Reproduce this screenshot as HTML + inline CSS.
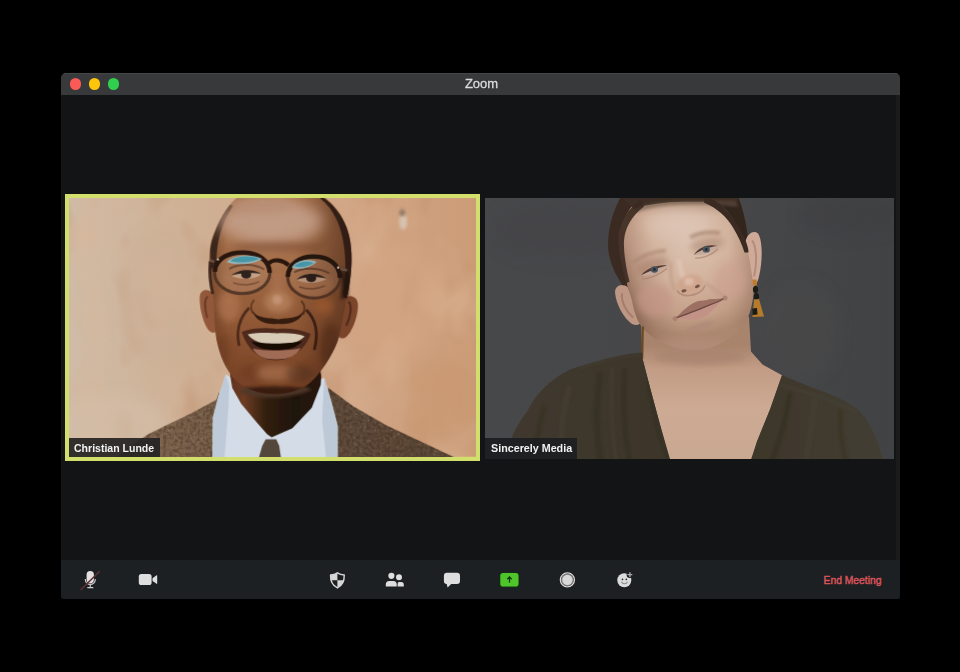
<!DOCTYPE html>
<html lang="en">
<head>
<meta charset="utf-8">
<title>Zoom</title>
<style>
*{box-sizing:border-box;margin:0;padding:0}
html,body{width:960px;height:672px;background:#000;overflow:hidden;font-family:"Liberation Sans",sans-serif}
#win{position:absolute;left:61px;top:73px;width:838.8px;height:525.6px;background:#131416;border-radius:5px 5px 3px 3px;overflow:hidden}
#titlebar{position:absolute;left:0;top:0;width:100%;height:22px;background:#38393b;border-top:1px solid #444547}
#title{position:absolute;left:0;right:0;top:1.9px;text-align:center;font-size:13.7px;line-height:16px;color:#dcdcdc;padding-left:2px;-webkit-text-stroke:.3px #dcdcdc}
#title span{display:inline-block;transform:scaleX(.95)}
.tl{position:absolute;top:4.4px;width:11.5px;height:11.5px;border-radius:50%}
#edge{position:absolute;right:0;top:22px;width:3.5px;bottom:0;background:#1a1b1c}
#toolbar{position:absolute;left:0;top:487.3px;width:100%;height:39px;background:#1c2022}
#icons{position:absolute;left:0;top:-.3px}
.tile{position:absolute;overflow:hidden}
#t1{left:3.75px;top:121px;width:415.65px;height:266.8px;background:#d3df6c}
#t1 svg{position:absolute;left:4px;top:4.2px}
#t2{left:424px;top:124.5px;width:409px;height:261px;background:#444446}
#t2 svg{position:absolute;left:0;top:0}
.label{position:absolute;left:0;bottom:0;height:19.5px;color:#f2f2f2;font-weight:bold;font-size:11.3px;line-height:19.5px;white-space:nowrap}
.label span{display:inline-block;transform:scaleX(.932);transform-origin:0 50%;position:relative}
#l1{left:4px;bottom:4px;height:18.6px;line-height:18.6px;width:91px;padding-left:5.3px;background:rgba(38,36,34,.93)}
#l1 span{top:.9px}
#l2{height:20.8px;line-height:20.8px;width:92px;padding-left:5.7px;background:rgba(30,31,33,.95)}
#l2 span{top:.2px;transform:scaleX(.95)}
#end{position:absolute;left:762.6px;top:502px;font-size:10.3px;line-height:12px;color:#d9535a;-webkit-text-stroke:.45px #d9535a;white-space:nowrap}
.ico{position:absolute;top:0;left:0}
</style>
</head>
<body>
<div id="win">
  <div id="titlebar">
    <div class="tl" style="left:8.7px;background:#fc5a56"></div>
    <div class="tl" style="left:27.9px;background:#fdc50c"></div>
    <div class="tl" style="left:46.8px;background:#30d04e"></div>
    <div id="title"><span>Zoom</span></div>
  </div>
  <div id="edge"></div>
  <div class="tile" id="t1">
    <svg width="407.65" height="258.6" viewBox="68.75 198.2 407.65 258.6">
<defs>
<linearGradient id="bg1" x1="68" y1="0" x2="477" y2="0" gradientUnits="userSpaceOnUse">
<stop offset="0" stop-color="#d0bba6"/><stop offset=".2" stop-color="#cfb49a"/><stop offset=".5" stop-color="#cfaa8c"/><stop offset=".72" stop-color="#d1a483"/><stop offset="1" stop-color="#cc9c77"/>
</linearGradient>
<radialGradient id="skin1" cx="270" cy="218" r="160" gradientUnits="userSpaceOnUse">
<stop offset="0" stop-color="#b88c6e"/><stop offset=".2" stop-color="#ab7651"/><stop offset=".45" stop-color="#9b643f"/><stop offset=".75" stop-color="#8c5432"/><stop offset="1" stop-color="#7a4528"/>
</radialGradient>
<linearGradient id="side1" x1="205" y1="0" x2="355" y2="0" gradientUnits="userSpaceOnUse">
<stop offset="0" stop-color="#2a140c" stop-opacity=".3"/><stop offset=".15" stop-color="#2a140c" stop-opacity="0"/><stop offset=".6" stop-color="#2a140c" stop-opacity="0"/><stop offset="1" stop-color="#2a140c" stop-opacity=".45"/>
</linearGradient>
<linearGradient id="neck1" x1="226" y1="0" x2="324" y2="0" gradientUnits="userSpaceOnUse">
<stop offset="0" stop-color="#5a2f1c"/><stop offset=".18" stop-color="#6e3c24"/><stop offset=".4" stop-color="#33200f"/><stop offset=".7" stop-color="#1e1208"/><stop offset="1" stop-color="#2a180e"/>
</linearGradient>
<linearGradient id="jk1" x1="110" y1="0" x2="460" y2="0" gradientUnits="userSpaceOnUse">
<stop offset="0" stop-color="#826851"/><stop offset=".3" stop-color="#785f4a"/><stop offset=".62" stop-color="#614c3b"/><stop offset="1" stop-color="#5c4838"/>
</linearGradient>
<filter id="b1" x="-5%" y="-5%" width="110%" height="110%"><feGaussianBlur stdDeviation=".55"/></filter>
<filter id="b2" x="-150%" y="-150%" width="400%" height="400%"><feGaussianBlur stdDeviation="1.6"/></filter>
<filter id="b3" x="-150%" y="-150%" width="400%" height="400%"><feGaussianBlur stdDeviation="3"/></filter>
<filter id="b6" x="-150%" y="-150%" width="400%" height="400%"><feGaussianBlur stdDeviation="7"/></filter>
<filter id="tw" x="0" y="0" width="100%" height="100%" color-interpolation-filters="sRGB"><feTurbulence type="fractalNoise" baseFrequency=".3" numOctaves="2" seed="3" result="n"/><feColorMatrix in="n" values="0 0 0 0 .16  0 0 0 0 .11  0 0 0 0 .07  2.2 2.2 0 0 -1.9" result="d"/><feColorMatrix in="n" values="0 0 0 0 .72  0 0 0 0 .62  0 0 0 0 .52  -2.2 0 -2.2 0 1.75" result="l"/><feMerge result="m"><feMergeNode in="d"/><feMergeNode in="l"/></feMerge><feComposite in="m" in2="SourceGraphic" operator="in"/></filter>
<filter id="mot" x="0" y="0" width="100%" height="100%" color-interpolation-filters="sRGB"><feTurbulence type="fractalNoise" baseFrequency=".018 .012" numOctaves="3" seed="11" result="n"/><feColorMatrix in="n" values="0 0 0 0 .86  0 0 0 0 .72  0 0 0 0 .6  3 0 0 0 -1.35" result="l"/><feColorMatrix in="n" values="0 0 0 0 .72  0 0 0 0 .5  0 0 0 0 .36  0 -3 0 0 1.3" result="d"/><feMerge><feMergeNode in="d"/><feMergeNode in="l"/></feMerge></filter>
<clipPath id="hc"><path d="M240 196 C228 203 218 220 211 241 C208 255 209 275 212 292 L213.500 300 C214 320 215 335 217 343 C219.500 355 225 368 233 378 C243 389 260 394.500 274 394.500 C290 394.500 305 389 314 379 C325 367 335 350 338.500 338 C343 320 345 305 347 295 C351 280 352 262 351 250 C350 230 342 212 326 199 L322 196Z"/></clipPath>
<clipPath id="c1"><rect x="68.5" y="197.5" width="408.5" height="259.5"/></clipPath>
</defs>
<g clip-path="url(#c1)">
<rect x="60" y="190" width="430" height="280" fill="url(#bg1)"/>
<rect x="68" y="197" width="410" height="262" filter="url(#mot)" opacity=".45"/>
<g filter="url(#b6)" opacity=".5">
<ellipse cx="110" cy="425" rx="60" ry="30" fill="#d4c0ac"/>
<ellipse cx="400" cy="300" rx="40" ry="60" fill="#d4a684"/>
<ellipse cx="160" cy="300" rx="40" ry="70" fill="#cbb097"/>
<ellipse cx="440" cy="400" rx="40" ry="40" fill="#c79670"/>
<ellipse cx="380" cy="400" rx="30" ry="20" fill="#cfa585"/>
</g>
<ellipse cx="403" cy="222" rx="4" ry="8" fill="#d8cabc" filter="url(#b2)" opacity=".8"/><ellipse cx="402" cy="213" rx="3" ry="3.500" fill="#86705f" filter="url(#b2)" opacity=".8"/>
<g filter="url(#b1)">
<!-- jacket -->
<path id="jk" d="M219 392 L216 400 L190 414 L166 425.500 L147 435 L112 460 L458 460 L453 457 L420 441.500 L386 425.500 L353 406.500 L328 388 L320 420 L225 420Z" fill="url(#jk1)"/>
<!-- shirt -->
<path d="M225.500 374.500 L218 397 L212.500 418 L212 460 L337.500 460 L337.500 426 L331 401 L324 378 L300 390 L250 390Z" fill="#d3dce7"/>
<path d="M225.500 374.500 L218 397 L212.500 418 L212 460 L224 460 L228 410 L229 386Z" fill="#b9c6d4" opacity=".8"/>
<path d="M324 378 L331 401 L337.500 426 L337.500 460 L326 460 L322 420Z" fill="#b4c1cf" opacity=".7"/>
<!-- tie -->
<path d="M265.500 439.500 L276 439.500 L279 446 L281 460 L258 460 L262 446Z" fill="#53473a"/>
<!-- neck -->
<path d="M231 365 L230 376 L232 388 L241 404 L256 422 L267 434.500 L271.500 437.500 L276 435.500 L292 428.500 L311.500 408 L320.500 385 L321 376 L319 365Z" fill="url(#neck1)"/>
<path d="M238 392 C255 400 290 400 312 390 L300 384 L250 384Z" fill="#50392c" filter="url(#b2)" opacity=".9"/>
<!-- ears -->
<path d="M214.500 295 C209 288 200 288.500 199.500 297 C199 310 204 326 209 331 C213 334.500 216.500 333 217.500 328Z" fill="#93583a"/>
<path d="M208 297 C204 298 204 308 207 318" stroke="#5a2f1c" stroke-width="2" fill="none" opacity=".7"/>
<path d="M341 300 C346 294.500 356 294.500 357.500 303 C359 314 352 332 346 337 C342 340 338 338.500 337 333Z" fill="#7a452c"/>
<path d="M348 302 C352 304 351 316 346 326" stroke="#3e2015" stroke-width="2" fill="none" opacity=".7"/>
<!-- head -->
<path d="M240 196 C228 203 218 220 211 241 C208 255 209 275 212 292 L213.500 300 C214 320 215 335 217 343 C219.500 355 225 368 233 378 C243 389 260 394.500 274 394.500 C290 394.500 305 389 314 379 C325 367 335 350 338.500 338 C343 320 345 305 347 295 C351 280 352 262 351 250 C350 230 342 212 326 199 L322 196Z" fill="url(#skin1)"/>
<path d="M240 196 C228 203 218 220 211 241 C208 255 209 275 212 292 L213.500 300 C214 320 215 335 217 343 C219.500 355 225 368 233 378 C243 389 260 394.500 274 394.500 C290 394.500 305 389 314 379 C325 367 335 350 338.500 338 C343 320 345 305 347 295 C351 280 352 262 351 250 C350 230 342 212 326 199 L322 196Z" fill="url(#side1)"/>
<!-- hair rims -->
<path d="M230 205 C220 217 212.500 236 210 250 L211 270 L216.500 263 C215.500 245 221 224 233 206Z" fill="#33221b" opacity=".9"/>
<path d="M322 197 C341 210 350 230 351 250 C352 262 351 280 347 296 L343 294 C347 270 346 240 336 219 C332 211 327 204 320 198.500Z" fill="#2c1c16" opacity=".92"/>
<!-- face shading -->
<g clip-path="url(#hc)">
<ellipse cx="270" cy="222" rx="52" ry="22" fill="#c29c86" filter="url(#b6)" opacity=".95"/>
<ellipse cx="262" cy="206" rx="30" ry="8" fill="#b88e74" filter="url(#b3)" opacity=".7"/>
<ellipse cx="274" cy="391.500" rx="42" ry="5" fill="#2e170f" filter="url(#b2)" opacity=".85"/>
<ellipse cx="276" cy="373" rx="22" ry="8" fill="#a26a48" filter="url(#b3)" opacity=".85"/>
<ellipse cx="229" cy="306" rx="11" ry="16" fill="#ac7250" filter="url(#b3)" opacity=".85"/>
<ellipse cx="223" cy="352" rx="7" ry="18" fill="#6a3a22" filter="url(#b3)" opacity=".5"/>
<ellipse cx="323" cy="306" rx="10" ry="9" fill="#96562f" filter="url(#b3)" opacity=".85"/>
<ellipse cx="330" cy="347" rx="10" ry="24" fill="#4a2814" filter="url(#b3)" opacity=".55"/>
<ellipse cx="300" cy="374" rx="14" ry="9" fill="#53301c" filter="url(#b3)" opacity=".55"/>
<ellipse cx="250" cy="372" rx="10" ry="8" fill="#6a3a22" filter="url(#b3)" opacity=".45"/>
<ellipse cx="278" cy="247" rx="46" ry="5" fill="#74422c" filter="url(#b3)" opacity=".5"/>
<ellipse cx="243" cy="280" rx="22" ry="14" fill="#a46c4c" filter="url(#b3)" opacity=".6"/>
<ellipse cx="312" cy="285" rx="20" ry="13" fill="#985e3e" filter="url(#b3)" opacity=".55"/>
</g>
<path d="M341 268 C346 272 349 282 348 296 L340 300 C342 290 342 280 340 272Z" fill="#1c0e08" opacity=".75" filter="url(#b2)"/>
<!-- nose -->
<ellipse cx="277" cy="285" rx="6.500" ry="14" fill="#a87050" filter="url(#b3)" opacity=".9"/>
<ellipse cx="278" cy="302" rx="14" ry="11" fill="#b07a56" filter="url(#b3)"/>
<ellipse cx="277" cy="300" rx="5" ry="5" fill="#c8987a" filter="url(#b2)" opacity=".8"/>
<path d="M252 310 C257 320 270 317.500 278 319.500 C288 317.500 298 320 304 310 C301 322 289 325 278 324 C266 325 255 322 252 310Z" fill="#2a140c" opacity=".9"/>
<path d="M254 300 C250 304 250 310 253 314" stroke="#4a2614" stroke-width="2" fill="none" opacity=".6"/>
<path d="M301 301 C305 305 305 311 303 315" stroke="#3a1c0e" stroke-width="2" fill="none" opacity=".6"/>
<!-- mouth -->
<path d="M241.500 332 C254 327 268 328 277 329 C288 328 300 329 310.500 334 C305 350 291 360.500 276 360.500 C260 360.500 247 350 241.500 332Z" fill="#4e2a1e"/>
<path d="M247.500 334.500 C258 332.500 270 333 277 333.500 C288 333 298 334 304.500 336.500 C299 342.500 290 344.500 276 344.500 C262 344.500 252.500 341.500 247.500 334.500Z" fill="#d9ccb6"/>
<path d="M251 341.500 C262 344.500 290 344.500 302 341 C297 348 288 350 276 350 C264 350 256 348 251 341.500Z" fill="#120805"/>
<path d="M252.500 348.500 C262 351.500 290 351.500 300.500 348 C296 356.500 288 359.500 276 359.500 C264 359.500 256.500 356.500 252.500 348.500Z" fill="#a06c56"/>
<!-- smile lines -->
<path d="M249 308 C239 318 235.500 332 239 346" stroke="#3e2015" stroke-width="2.800" fill="none" opacity=".8"/>
<path d="M306 310 C316 320 318.500 334 314 350" stroke="#2a140c" stroke-width="2.800" fill="none" opacity=".8"/>
<!-- eyes -->
<path d="M231 276 C238 270.500 253 269.500 261.500 274.500 C254 280 240 280.500 231 276Z" fill="#d8c4b0" opacity=".55"/>
<path d="M231 276 C238 269 253 268.500 261.500 274.500 C256 272.500 238 273 231 276Z" fill="#1e0f0a"/>
<ellipse cx="246" cy="275" rx="5" ry="3.800" fill="#1a0c08"/>
<path d="M296.500 280 C303 273 318 272.500 326.500 279 C319 284 304 284 296.500 280Z" fill="#d0b8a4" opacity=".5"/>
<path d="M296.500 280 C303 272.500 318 272 326.500 279 C320 276.500 304 276.500 296.500 280Z" fill="#170b07"/>
<ellipse cx="311" cy="278.500" rx="5" ry="3.800" fill="#150a06"/>
<path d="M229 269 C238 263.500 254 263.500 264 269.500" stroke="#4a2818" stroke-width="2" fill="none" opacity=".7"/>
<path d="M294 272.500 C303 267 319 267.500 329 273.500" stroke="#3a1c10" stroke-width="2" fill="none" opacity=".7"/>
<path d="M233 283 C241 286 252 285.500 259 282" stroke="#5a301c" stroke-width="1.400" fill="none" opacity=".7"/>
<path d="M299 287 C307 290 318 289.500 325 286" stroke="#4a2414" stroke-width="1.400" fill="none" opacity=".7"/>
<!-- glasses -->
<path d="M210 261.500 C209 272 210 284 212.500 294" stroke="#2f1c14" stroke-width="3" fill="none" opacity=".85"/>
<path d="M346 270 C348 280 347 290 345 298" stroke="#24140e" stroke-width="3.500" fill="none" opacity=".85"/>
<ellipse cx="242" cy="273.300" rx="27.600" ry="20.500" fill="#f0dcc0" fill-opacity=".1" stroke="#4e3222" stroke-width="3" stroke-opacity=".9"/>
<path d="M214.600 272 C215 258 230 252 244 252.800 C258 253.500 269 260 269.500 273" stroke="#2a1810" stroke-width="4.600" fill="none"/>
<ellipse cx="313.750" cy="277.400" rx="26.200" ry="20.800" fill="#f0dcc0" fill-opacity=".1" stroke="#4a2e20" stroke-width="3" stroke-opacity=".9"/>
<path d="M287.600 277 C288 263 301 256.500 314 256.800 C328 257 339.500 264 339.800 278" stroke="#24140e" stroke-width="4.600" fill="none"/>
<path d="M268.500 263.500 C273 259 282 259.500 288.500 265.500" stroke="#2a1810" stroke-width="4.200" fill="none"/>
<path d="M214 262 L209.500 260.500" stroke="#6a5040" stroke-width="2.400"/>
<path d="M340 269 L347 270.500" stroke="#6a5040" stroke-width="2.400"/>
<circle cx="217.800" cy="259.600" r="1.200" fill="#c8b8a8"/>
<circle cx="338" cy="267.700" r="1.200" fill="#c8b8a8"/>
<path d="M226.500 262.500 C232 255.500 250 253.500 262 259 C256 263.500 240 266.500 226.500 262.500Z" fill="#93bcc8" opacity=".9"/>
<path d="M230 261 C236 256 250 255 259 259 C253 262 240 264 230 261Z" fill="#4596a6"/>
<path d="M291.500 268 C295 260.500 307 258.500 316.500 262 C311 267.500 300 270.500 291.500 268Z" fill="#93bcc8" opacity=".9"/>
<path d="M294 266.500 C298 261.500 307 260.500 313.500 263 C309 266.500 301 268.500 294 266.500Z" fill="#4596a6"/>
</g>
<path d="M219 392 L216 400 L190 414 L166 425.500 L147 435 L112 460 L212 460 L212.500 418 L218 397Z M328 388 L353 406.500 L386 425.500 L420 441.500 L453 457 L458 460 L337.500 460 L337.500 426 L331 401Z" fill="#fff" filter="url(#tw)" opacity=".3"/>
</g>
</svg>
    <div class="label" id="l1"><span>Christian Lunde</span></div>
  </div>
  <div class="tile" id="t2">
    <svg width="409" height="261" viewBox="485 197.500 409 261">
<defs>
<linearGradient id="bg2" x1="485" y1="0" x2="894" y2="0" gradientUnits="userSpaceOnUse">
<stop offset="0" stop-color="#47484a"/><stop offset=".55" stop-color="#47474a"/><stop offset=".8" stop-color="#444547"/><stop offset="1" stop-color="#414244"/>
</linearGradient>
<radialGradient id="skin2" cx="690" cy="240" r="95" gradientUnits="userSpaceOnUse">
<stop offset="0" stop-color="#dcc4b2"/><stop offset=".45" stop-color="#d2b29c"/><stop offset=".8" stop-color="#c49f88"/><stop offset="1" stop-color="#ad8870"/>
</radialGradient>
<linearGradient id="chest2" x1="0" y1="345" x2="0" y2="460" gradientUnits="userSpaceOnUse">
<stop offset="0" stop-color="#a9846c"/><stop offset=".2" stop-color="#c29c84"/><stop offset=".55" stop-color="#cdaa94"/><stop offset="1" stop-color="#c9a892"/>
</linearGradient>
<linearGradient id="dr2" x1="500" y1="0" x2="890" y2="0" gradientUnits="userSpaceOnUse">
<stop offset="0" stop-color="#40392e"/><stop offset=".4" stop-color="#3c362b"/><stop offset=".7" stop-color="#3e382c"/><stop offset="1" stop-color="#443e32"/>
</linearGradient>
<linearGradient id="lsh" x1="616" y1="250" x2="652" y2="238" gradientUnits="userSpaceOnUse"><stop offset="0" stop-color="#7a5646" stop-opacity=".55"/><stop offset=".35" stop-color="#8e6856" stop-opacity=".3"/><stop offset="1" stop-color="#a07a68" stop-opacity="0"/></linearGradient>
<linearGradient id="tsh" x1="0" y1="197" x2="0" y2="216" gradientUnits="userSpaceOnUse"><stop offset="0" stop-color="#5a4436" stop-opacity=".8"/><stop offset=".4" stop-color="#8a6c5a" stop-opacity=".35"/><stop offset="1" stop-color="#a88a78" stop-opacity="0"/></linearGradient>
<linearGradient id="rsh" x1="755" y1="0" x2="728" y2="0" gradientUnits="userSpaceOnUse"><stop offset="0" stop-color="#8e6856" stop-opacity=".4"/><stop offset="1" stop-color="#a07a68" stop-opacity="0"/></linearGradient>
<filter id="f1" x="-5%" y="-5%" width="110%" height="110%"><feGaussianBlur stdDeviation=".55"/></filter>
<filter id="f2" x="-150%" y="-150%" width="400%" height="400%"><feGaussianBlur stdDeviation="1.600"/></filter>
<filter id="f3" x="-150%" y="-150%" width="400%" height="400%"><feGaussianBlur stdDeviation="3"/></filter>
<filter id="f6" x="-150%" y="-150%" width="400%" height="400%"><feGaussianBlur stdDeviation="7"/></filter>
<clipPath id="fc"><path d="M642 196 C630 205 620 222 618.500 235 C618 250 622 268 626 280 L628 287 L632 300 C634 312 638 322 643 328 C651 337 662 343 672 346 C682 350 697 351 707 348.500 C722 344 738 333 746 321 C751 312 753 300 754 288 L750 262 C748 250 746 244 742 236 C738 225 730 212 722 206 C716 201 712 198 709 196Z"/></clipPath>
<clipPath id="dc"><path d="M642.500 352 C620 353 592 362 570 369 C548 380 535 395 527.700 410 C516.500 425 508.500 440 504.500 462 L671 462 L660 424 L650 387 L642.500 358Z M782 374.700 C800 382 815 388 827 392.600 C845 400 855 406 861 412 C872 425 878 440 884 462 L750 462 L757 441 L770 409Z"/></clipPath>
<clipPath id="c2"><rect x="485" y="197.500" width="409" height="261"/></clipPath>
</defs>
<g clip-path="url(#c2)">
<rect x="480" y="190" width="420" height="280" fill="url(#bg2)"/>
<g filter="url(#f6)" opacity=".6">
<ellipse cx="560" cy="230" rx="70" ry="30" fill="#444547"/>
<ellipse cx="800" cy="330" rx="40" ry="50" fill="#48484a"/>
<ellipse cx="850" cy="215" rx="50" ry="20" fill="#3f4042"/>
</g>
<g filter="url(#f1)">
<!-- hair back -->
<path d="M621 196 C613 210 608 228 608 244 C608 258 614 272 622 284 L631 293 L640 250 L652 196Z" fill="#3a2c23"/>
<path d="M700 196 L738 196 C743 208 746 222 747.500 234 L745 248 L728 230Z" fill="#33261e"/>
<!-- ears -->
<path d="M628 287 C622 282 615 285 615 292 C616 304 624 318 632 323.500 C637 326 641 324 641 320Z" fill="#bd9783"/>
<path d="M622 293 C621 302 627 312 633 317" stroke="#9a7462" stroke-width="2" fill="none" opacity=".7"/>
<path d="M745 244 C746 234 753 229 758 233 C763 240 762.500 262 759 276 C757.500 283 754 287 752 286Z" fill="#d0aa98"/>
<path d="M752 240 C757 246 757 264 754 276" stroke="#a07a68" stroke-width="2" fill="none" opacity=".6"/>
<!-- neck and chest -->
<path d="M641 322 L642.500 358 L650 387 L660 424 L670 462 L751 462 L757 441 L770 409 L782 374.700 L762.500 364 L751 351 L749 316Z" fill="url(#chest2)"/>
<ellipse cx="700" cy="356" rx="46" ry="9" fill="#a8826e" filter="url(#f3)" opacity=".7"/>
<!-- face -->
<path d="M642 196 C630 205 620 222 618.500 235 C618 250 622 268 626 280 L628 287 L632 300 C634 312 638 322 643 328 C651 337 662 343 672 346 C682 350 697 351 707 348.500 C722 344 738 333 746 321 C751 312 753 300 754 288 L750 262 C748 250 746 244 742 236 C738 225 730 212 722 206 C716 201 712 198 709 196Z" fill="url(#skin2)"/>
<g clip-path="url(#fc)">
<rect x="600" y="190" width="170" height="180" fill="url(#lsh)"/>
<rect x="610" y="190" width="150" height="30" fill="url(#tsh)"/>
<rect x="700" y="190" width="70" height="170" fill="url(#rsh)"/>
<ellipse cx="655" cy="300" rx="18" ry="16" fill="#c49686" filter="url(#f3)" opacity=".65"/>
<ellipse cx="730" cy="280" rx="16" ry="18" fill="#cca090" filter="url(#f3)" opacity=".55"/>
<ellipse cx="690" cy="345" rx="40" ry="8" fill="#b48c7a" filter="url(#f3)" opacity=".7"/>
<ellipse cx="678" cy="224" rx="34" ry="14" fill="#dec6b8" filter="url(#f6)" opacity=".7"/>
</g>
<!-- hair top strip -->
<path d="M621 196 L740 196 L736 202 C722 201.600 704 201 684 201.200 C664 201.600 648 203.500 634 208.500Z" fill="#3d2e25"/>
<path d="M634 208 C648 203 664 201 684 200.500 C704 200.500 722 201 736 201 L738 206 C722 204 700 203.500 684 204 C664 204.500 648 207 636 212Z" fill="#6a5446" opacity=".6" filter="url(#f2)"/>
<path d="M704 195 C722 200 737 220 744 236 C747 243 748.500 248 748.500 252 L744.500 252 C742 244 738 235 733 227 C727 217 718 208 704 202Z" fill="#3a2c23" filter="url(#f1)"/>
<path d="M642 199 C627 208 616 226 615 238 C614.500 252 618 268 623 285 L629.500 281 C626 268 623.500 252 624 240 C625 228 631 216 644 206Z" fill="#3a2c23" filter="url(#f1)" opacity=".9"/>
<!-- eye sockets -->
<ellipse cx="652" cy="265" rx="17" ry="7" transform="rotate(-20 652 265)" fill="#a6806c" filter="url(#f3)" opacity=".6"/>
<ellipse cx="707" cy="244" rx="17" ry="7" transform="rotate(-10 707 244)" fill="#aa8470" filter="url(#f3)" opacity=".55"/>
<!-- eyes -->
<path d="M641 275 C647 268.500 658 264.500 667 265 C662 271.500 650 276 641 275Z" fill="#c4aa9c"/>
<path d="M641 275 C647 267.500 658 264 667 265 C660 266.500 648 271 641 275Z" fill="#54382e"/>
<ellipse cx="654.400" cy="269" rx="3.600" ry="3.200" fill="#48525c"/>
<circle cx="654.400" cy="269" r="1.400" fill="#262a30"/>
<path d="M693.750 254.400 C699 247 710 243.500 717.500 245.600 C713 251.500 702 255.500 693.750 254.400Z" fill="#c4aa9c"/>
<path d="M693.750 254.400 C699 246 710 243 717.500 245.600 C711 246 699 250 693.750 254.400Z" fill="#54382e"/>
<ellipse cx="706.250" cy="248.900" rx="3.600" ry="3.200" fill="#4a5660"/>
<circle cx="706.250" cy="248.900" r="1.400" fill="#262a30"/>
<path d="M642 278.500 C650 278.500 660 274 667 268" stroke="#a07866" stroke-width="1.200" fill="none" opacity=".6"/>
<path d="M695 257.500 C703 258 712 254 718 248.500" stroke="#a07866" stroke-width="1.200" fill="none" opacity=".6"/>
<!-- brows -->
<path d="M632.500 262.500 C642 255 654 251 666 250" stroke="#a8826c" stroke-width="4" fill="none" opacity=".6" filter="url(#f2)"/>
<path d="M690 237 C700 232 711 231 720 232.500" stroke="#a07a64" stroke-width="4" fill="none" opacity=".6" filter="url(#f2)"/>
<!-- nose -->
<path d="M679 259 C680 268 682 276 686 282" stroke="#e2c8b8" stroke-width="5" fill="none" opacity=".7" filter="url(#f2)"/>
<path d="M671 262 C670 272 671 282 675 289" stroke="#b48c78" stroke-width="3" fill="none" opacity=".45" filter="url(#f2)"/>
<ellipse cx="690" cy="284" rx="13" ry="9.500" transform="rotate(-15 690 284)" fill="#cfa58e" filter="url(#f2)"/>
<ellipse cx="689" cy="281" rx="5" ry="4" fill="#dfbfac" filter="url(#f2)" opacity=".9"/>
<ellipse cx="684" cy="290.300" rx="2.600" ry="1.500" transform="rotate(-15 684 290.300)" fill="#6a4436" opacity=".85"/>
<ellipse cx="697.400" cy="285.800" rx="2.600" ry="1.500" transform="rotate(-25 697.400 285.800)" fill="#6a4436" opacity=".85"/>
<path d="M677 290 C680 295 687 296 692 294.500 C698 293.500 703 290 705 285" stroke="#a67c68" stroke-width="1.800" fill="none" opacity=".6" filter="url(#f1)"/>
<path d="M705 282 C712 288 720 292 726 298" stroke="#b89080" stroke-width="2.400" fill="none" opacity=".5" filter="url(#f2)"/>
<!-- mouth -->
<path d="M676 317.400 C681 312 686 307.500 689.600 305 C694 302 698 300 702 300.200 C705 300.500 708 298.800 712.500 298.600 C717 298.300 721 298 724 298 C722 301 720.500 302 718.750 303.300 C716 307 713 309.500 710.400 311.700 C706 316 701 318.500 697 319 C693 319.600 690 319.200 686.500 318.400 C682 318.500 679 318.200 676 317.400Z" fill="#c29286"/>
<path d="M676 317.400 C681 312 686 307.500 689.600 305 C694 302 698 300 702 300.200 C705 300.500 708 298.800 712.500 298.600 C717 298.300 721 298 724 298 C718 301.500 712 303.500 707.300 305.400 C702 307.800 697 309.800 691.700 311.700 C686 314 681 316 676 317.400Z" fill="#9c7064"/>
<path d="M676 317.400 C681 316 686 314 691.700 311.700 C697 309.800 702 307.800 707.300 305.400 C712 303.500 718 301.500 724 298" stroke="#6c4a42" stroke-width="1.300" fill="none"/>
<ellipse cx="700" cy="326" rx="16" ry="3.500" transform="rotate(-18 700 326)" fill="#b08878" filter="url(#f2)" opacity=".7"/>
<circle cx="675" cy="318" r="2.500" fill="#a27a6a" filter="url(#f1)" opacity=".7"/>
<circle cx="725" cy="297.500" r="2.500" fill="#a27a6a" filter="url(#f1)" opacity=".7"/>
<!-- earrings -->
<path d="M642.800 326 L642.200 358" stroke="#6a4a22" stroke-width="2.200"/>
<path d="M752.500 279 L756.500 279 L757 285 L753 285Z" fill="#bd7a2a"/>
<ellipse cx="755.500" cy="289" rx="2.600" ry="3.500" fill="#1c1a18"/>
<ellipse cx="756.500" cy="296" rx="2.600" ry="3.500" fill="#1c1a18"/>
<path d="M754 299 L759 298.500 L764 316 L752.500 316.500Z" fill="#b57a2c"/>
<path d="M752.500 308 L757 307.500 L757.500 314 L752.500 314.500Z" fill="#1c1a18"/>
<!-- dress -->
<path d="M642.500 352 C620 353 592 362 570 369 C548 380 535 395 527.700 410 C516.500 425 508.500 440 504.500 462 L671 462 L660 424 L650 387 L642.500 358Z" fill="url(#dr2)"/>
<path d="M782 374.700 C800 382 815 388 827 392.600 C845 400 855 406 861 412 C872 425 878 440 884 462 L750 462 L757 441 L770 409Z" fill="url(#dr2)"/>
<g clip-path="url(#dc)">
<g filter="url(#f2)" opacity=".38">
<path d="M600 372 C596 400 596 430 600 460" stroke="#2c271e" stroke-width="5" fill="none"/>
<path d="M625 368 C622 400 624 430 630 460" stroke="#2c271e" stroke-width="4" fill="none"/>
<path d="M570 385 C562 410 560 435 562 460" stroke="#4a4436" stroke-width="6" fill="none"/>
<path d="M612 366 C610 400 612 430 616 460" stroke="#4a4436" stroke-width="4" fill="none"/>
<path d="M545 405 C538 425 536 445 536 460" stroke="#2e291f" stroke-width="4" fill="none"/>
<path d="M648 380 C652 410 660 440 668 460" stroke="#2e291f" stroke-width="3" fill="none"/>
<path d="M790 392 C786 420 778 445 772 460" stroke="#2c271e" stroke-width="5" fill="none"/>
<path d="M815 398 C812 425 808 445 806 460" stroke="#4c4638" stroke-width="5" fill="none"/>
<path d="M840 408 C840 430 842 448 846 460" stroke="#2e291f" stroke-width="4" fill="none"/>
<path d="M780 384 C800 390 830 398 858 412" stroke="#4c4638" stroke-width="3" fill="none"/>
<path d="M580 368 C600 360 625 355 642 354" stroke="#4a4436" stroke-width="3" fill="none"/>
</g>
</g>
</g>
</g>
</svg>
    <div class="label" id="l2"><span>Sincerely Media</span></div>
  </div>
  <div id="toolbar"><svg id="icons" width="839.5" height="39" viewBox="61 560 839.5 39">
<g fill="#dedede">
<!-- mic -->
<rect x="86.600" y="571" width="7.300" height="12.200" rx="3.650" fill="#e6e0e3"/>
<path d="M85.300 579 C85.300 586.200 95.300 586.200 95.300 579" stroke="#cfcacc" stroke-width="1.200" fill="none"/>
<path d="M90.300 584.500 L90.300 587.400 M87.300 587.700 L93.300 587.700" stroke="#cfcacc" stroke-width="1.200" fill="none"/>
<path d="M80.600 590 L99.700 571.300" stroke="#5a3236" stroke-width="1.600" fill="none"/>
<!-- camera -->
<rect x="138.800" y="574" width="12.800" height="11" rx="2.600"/>
<path d="M152.500 578.300 L156.600 575.300 Q157.200 575 157.200 575.800 L157.200 583.300 Q157.200 584.100 156.600 583.800 L152.500 580.900Z"/>
<!-- shield -->
<g transform="translate(337.400 580.300) scale(.9) translate(-337.200 -580.300)">
<path d="M337.200 572 C334.500 573.800 332 574.300 329.600 574.500 C329.400 581 331.500 586 337.200 588.800 C342.900 586 345 581 344.800 574.500 C342.400 574.300 339.900 573.800 337.200 572Z" fill="none" stroke="#d6d6d6" stroke-width="1.600" stroke-linejoin="round"/>
<path d="M337.200 572.500 C334.500 574 332 574.600 330 574.800 L330 580.300 L337.200 580.300Z" fill="#d6d6d6"/>
<path d="M337.200 580.300 L344.300 580.300 C343.600 584 341.500 586.600 337.200 588.400Z" fill="#d6d6d6"/>
</g>
<!-- people -->
<circle cx="391.400" cy="575.800" r="3.100"/>
<circle cx="399" cy="577.200" r="3"/>
<path d="M385.800 586.400 L385.800 584.600 Q385.800 581.100 389.300 581.100 L393.300 581.100 Q396.700 581.100 396.700 584.600 L396.700 586.400Z"/>
<path d="M397.600 586.400 L397.600 584.400 Q397.600 582 399 582 L401.200 582 Q403.800 582 403.800 584.800 L403.800 586.400Z"/>
<!-- chat -->
<path d="M446.900 572.700 L457 572.700 Q460 572.700 460 575.700 L460 581.100 Q460 584.100 457 584.100 L451.200 584.100 L447.600 587.600 L446.700 584.100 Q443.900 584.100 443.900 581.100 L443.900 575.700 Q443.900 572.700 446.900 572.700Z"/>
<!-- share -->
<rect x="499.700" y="572.400" width="19.400" height="14.800" rx="3.200" fill="#0c3a0c"/>
<rect x="500.300" y="573" width="18.200" height="13.600" rx="2.800" fill="#4fc52b"/>
<path d="M509.500 577.300 L509.500 582.400 M507.300 579.200 L509.500 576.900 L511.700 579.200" stroke="#0c3a0c" stroke-width="1.300" fill="none"/>
<!-- record -->
<circle cx="567.400" cy="579.850" r="7" fill="none" stroke="#dcdcdc" stroke-width="1.400"/>
<circle cx="567.400" cy="579.850" r="6.400" fill="#7c7c7c"/>
<circle cx="567.400" cy="579.850" r="5.200" fill="#d9d9d9"/>
<!-- reaction -->
<circle cx="624.300" cy="580.300" r="7" fill="#dcdcdc"/>
<circle cx="629.900" cy="574.700" r="3.300" fill="#1c2022"/>
<path d="M629.900 572.300 L629.900 577.100 M627.500 574.700 L632.300 574.700" stroke="#a8a8a8" stroke-width="1.300" fill="none"/>
<circle cx="622.500" cy="579.400" r=".8" fill="#222"/>
<circle cx="626.300" cy="579.400" r=".8" fill="#222"/>
<path d="M621.400 581.700 C622.500 584.400 626.400 584.400 627.500 581.700" stroke="#8e8e8e" stroke-width="1.100" fill="none"/>
</g>
</svg></div>
  <div id="end">End Meeting</div>
</div>
</body>
</html>
